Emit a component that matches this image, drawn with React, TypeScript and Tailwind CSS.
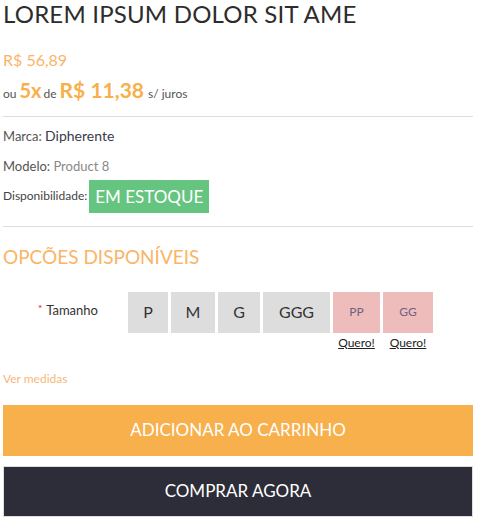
const font = { fontFamily: '"Lato", "Liberation Sans", sans-serif' };

const sizes = [
    { label: 'P', w: 'w-[40px]', out: false },
    { label: 'M', w: 'w-[44px]', out: false },
    { label: 'G', w: 'w-[42px]', out: false },
    { label: 'GGG', w: 'w-[67px]', out: false },
    { label: 'PP', w: 'w-[47px]', out: true },
    { label: 'GG', w: 'w-[50px]', out: true },
];

const App = () => {
    return (
        <div className="bg-white w-[481px] h-[526px]" style={font}>
            <div className="flex flex-col w-[470px] ml-[3px]">
                <h1 className="text-[24px] leading-[28px] text-[#2d2d2d] tracking-[0.2px]">
                    LOREM IPSUM DOLOR SIT AME
                </h1>

                {/* price */}
                <p className="text-[#fab568] text-[16px] leading-[20px] mt-[22px]">R$ 56,89</p>
                <div className="flex items-baseline mt-[4px] text-[#555]">
                    <span className="text-[12px]">ou</span>
                    <span className="text-[#f7b04b] text-[20px] font-bold ml-[3px]">5x</span>
                    <span className="text-[12px] ml-[2px]">de</span>
                    <span className="text-[#f7b04b] text-[21px] font-bold ml-[3px]">R$ 11,38</span>
                    <span className="text-[12px] ml-[4px]">s/ juros</span>
                </div>

                <hr className="border-[#dddddd] mt-[10px]" />

                <div className="flex flex-col text-[13px]">
                    <p className="mt-[9px] leading-[20px] text-[#555]">
                        Marca: <span className="text-[#3a3a4a] text-[14px]">Dipherente</span>
                    </p>
                    <p className="mt-[10px] leading-[20px] text-[#555]">
                        Modelo: <span className="text-[#888]">Product 8</span>
                    </p>
                    <div className="flex items-center mt-[4px]">
                        <span className="text-[#444] text-[12px]">Disponibilidade:</span>
                        <span className="bg-[#65c580] text-white text-[17px] h-[33px] leading-[33px] px-[6px] ml-[2px]">
                            EM ESTOQUE
                        </span>
                    </div>
                </div>

                <hr className="border-[#dddddd] mt-[13px]" />

                <h2 className="text-[#fab568] text-[19px] leading-[24px] mt-[18px]">OPCÕES DISPONÍVEIS</h2>

                <div className="flex mt-[23px]">
                    <div className="w-[125px] pl-[35px] pt-[9px] text-[13px] text-[#333]">
                        <span className="text-[#e00] text-[10px] align-top mr-[4px]">*</span>Tamanho
                    </div>
                    <div className="flex gap-[3px]">
                        {sizes.map((s) => (
                            <div key={s.label} className={`flex flex-col items-center ${s.w}`}>
                                <div
                                    className={`w-full h-[41px] flex items-center justify-center ${
                                        s.out
                                            ? 'bg-[#efbcbc] text-[#6b6380] text-[12px]'
                                            : 'bg-[#dddddd] text-[#333] text-[16px]'
                                    }`}
                                >
                                    {s.label}
                                </div>
                                {s.out && (
                                    <span className="underline text-[12px] text-[#222] mt-[1px] leading-[18px]">
                                        Quero!
                                    </span>
                                )}
                            </div>
                        ))}
                    </div>
                </div>

                <p className="text-[#f8b77a] text-[12px] leading-[16px] mt-[19px]">Ver medidas</p>

                <button className="bg-[#f7b04b] text-white text-[17px] h-[51px] w-full mt-[18px]">
                    ADICIONAR AO CARRINHO
                </button>
                <button className="bg-[#2c2d38] border border-[#dddddd] text-white text-[17px] h-[51px] w-full mt-[10px]">
                    COMPRAR AGORA
                </button>
            </div>
        </div>
    );
};

export default App;
